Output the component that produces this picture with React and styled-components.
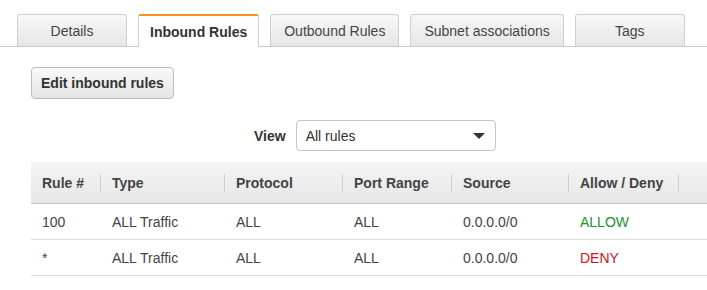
import React from 'react'
import styled, { createGlobalStyle } from 'styled-components'

const GlobalStyle = createGlobalStyle`
body {
  margin: 0;
  background: #fff;
  font-family: "Liberation Sans", Arial, Helvetica, sans-serif;
  font-size: 14px;
  color: #444;
}
`;

const Page = styled.div`
width: 707px;
height: 290px;
overflow: hidden;
`;

const TabBar = styled.div`
display: flex;
align-items: flex-end;
gap: 11px;
padding: 14px 0 0 17px;
border-bottom: 1px solid #c9c9c9;
`;

const Tab = styled.div`
box-sizing: border-box;
min-width: 110px;
height: ${({ active }) => (active ? '33px' : '32px')};
margin-bottom: ${({ active }) => (active ? '-1px' : '0')};
padding: ${({ active }) => (active ? '0 11px' : '0 13px')};
display: flex;
align-items: center;
justify-content: center;
border: 1px solid #cfcfcf;
border-top: ${({ active }) => (active ? '2px solid #f7931e' : '1px solid #cfcfcf')};
border-bottom: none;
border-radius: 3px 3px 0 0;
background: ${({ active }) => (active ? '#fff' : 'linear-gradient(#f7f7f7, #e6e6e6)')};
color: ${({ active }) => (active ? '#333' : '#444')};
font-weight: ${({ active }) => (active ? 'bold' : 'normal')};
white-space: nowrap;
cursor: pointer;
`;

const Content = styled.div`
padding: 20px 0 0 31px;
`;

const Button = styled.button`
box-sizing: border-box;
height: 32px;
padding: 0 9px;
border: 1px solid #bdbdbd;
border-radius: 4px;
background: linear-gradient(#f9f9f9, #e5e5e5);
font-family: inherit;
font-size: 14px;
font-weight: bold;
color: #333;
cursor: pointer;
`;

const ViewRow = styled.div`
display: flex;
align-items: center;
gap: 10px;
margin-top: 21px;
padding-left: 223px;
`;

const Label = styled.span`
font-weight: bold;
color: #333;
`;

const Select = styled.div`
box-sizing: border-box;
width: 200px;
height: 31px;
padding: 0 10px 0 9px;
display: flex;
align-items: center;
justify-content: space-between;
border: 1px solid #c6c6c6;
border-radius: 4px;
background: #fff;
color: #333;
`;

const Caret = styled.span`
width: 0;
height: 0;
border-left: 6px solid transparent;
border-right: 6px solid transparent;
border-top: 6px solid #333;
`;

const Grid = styled.div`
display: grid;
grid-template-columns: 70px 124px 118px 109px 117px 110px 1fr;
margin-top: 11px;
`;

const HeadCell = styled.div`
position: relative;
height: 41px;
display: flex;
align-items: center;
padding-left: 11px;
background: linear-gradient(#f4f4f4, #e7e7e7);
border-bottom: 1px solid #c4c4c4;
font-weight: bold;
color: #444;
white-space: nowrap;

&::after {
  content: '';
  display: ${({ last }) => (last ? 'none' : 'block')};
  position: absolute;
  right: 0;
  top: 12px;
  height: 18px;
  border-right: 1px solid #cfcfcf;
}
`;

const Cell = styled.div`
height: 35px;
display: flex;
align-items: center;
padding-left: 11px;
border-bottom: 1px solid #dedede;
color: ${({ tone }) => (tone === 'allow' ? '#1e8f2e' : tone === 'deny' ? '#d0111f' : '#444')};
white-space: nowrap;
`;

const tabs = ['Details', 'Inbound Rules', 'Outbound Rules', 'Subnet associations', 'Tags'];
const columns = ['Rule #', 'Type', 'Protocol', 'Port Range', 'Source', 'Allow / Deny', ''];
const rules = [
  ['100', 'ALL Traffic', 'ALL', 'ALL', '0.0.0.0/0', 'ALLOW'],
  ['*', 'ALL Traffic', 'ALL', 'ALL', '0.0.0.0/0', 'DENY'],
];

export default function App() {
  return (
    <Page>
      <GlobalStyle />
      <TabBar>
        {tabs.map((t) => (
          <Tab key={t} active={t === 'Inbound Rules'}>{t}</Tab>
        ))}
      </TabBar>
      <Content>
        <Button>Edit inbound rules</Button>
        <ViewRow>
          <Label>View</Label>
          <Select>
            All rules
            <Caret />
          </Select>
        </ViewRow>
        <Grid>
          {columns.map((c, i) => (
            <HeadCell key={i} last={i === columns.length - 1}>{c}</HeadCell>
          ))}
          {rules.map((r) => (
            <React.Fragment key={r[0]}>
              {r.map((v, i) => (
                <Cell key={i} tone={i === 5 ? v.toLowerCase() : undefined}>{v}</Cell>
              ))}
              <Cell />
            </React.Fragment>
          ))}
        </Grid>
      </Content>
    </Page>
  )
}
